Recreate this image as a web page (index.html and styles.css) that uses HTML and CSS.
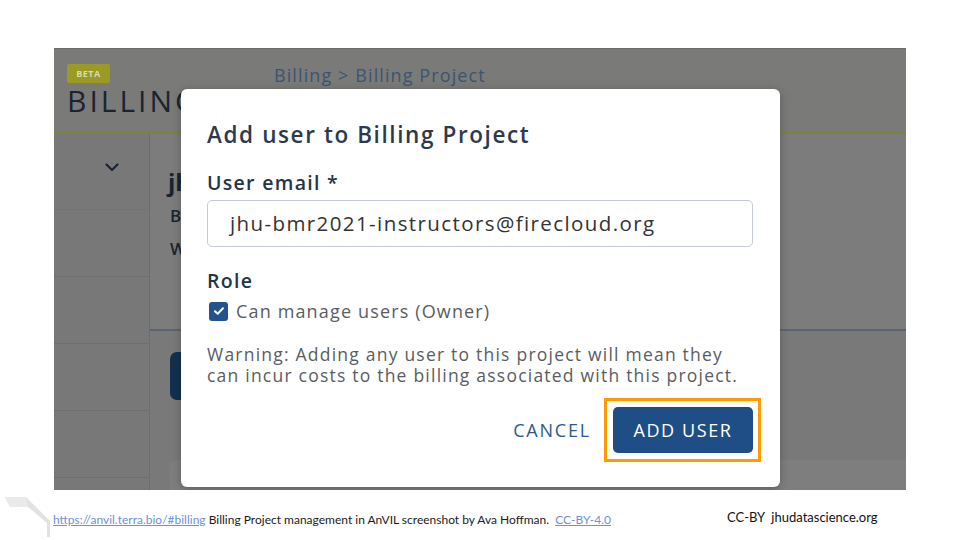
FILE: index.html
```html
<!DOCTYPE html>
<html>
<head>
<meta charset="utf-8">
<link rel="stylesheet" href="styles.css">
</head>
<body>
<div class="slide">
  <div class="shot">
    <div class="app">
      <header class="app-header">
        <div class="brand">
          <span class="beta">BETA</span>
          <span class="brand-title">BILLING</span>
        </div>
        <div class="crumbs">Billing &gt; Billing Project</div>
      </header>
      <div class="app-body">
        <aside class="sidebar">
          <div class="side-row side-top">
            <svg class="chev" width="14" height="9" viewBox="0 0 14 9"><path d="M1.5 1.5 L7 7 L12.5 1.5" fill="none" stroke="#1b2532" stroke-width="2.2" stroke-linecap="round" stroke-linejoin="round"/></svg>
          </div>
          <div class="side-row"></div>
          <div class="side-row"></div>
          <div class="side-row"></div>
          <div class="side-row"></div>
        </aside>
        <main class="main">
          <section class="panel">
            <div class="panel-text">
              <div class="panel-title">jh</div>
              <div class="panel-line">B</div>
              <div class="panel-line">W</div>
            </div>
          </section>
          <div class="main-lower">
            <div class="dark-btn"></div>
            <div class="lower-card"></div>
          </div>
        </main>
      </div>
    </div>

    <div class="modal">
      <h1 class="modal-title">Add user to Billing Project</h1>
      <label class="field-label">User email *</label>
      <div class="input">jhu-bmr2021-instructors@firecloud.org</div>
      <div class="field-label role">Role</div>
      <div class="check-row">
        <span class="checkbox">
          <svg width="12" height="10" viewBox="0 0 12 10"><path d="M2 5.2 L4.7 7.8 L10 2.3" fill="none" stroke="#fff" stroke-width="2" stroke-linecap="round" stroke-linejoin="round"/></svg>
        </span>
        <span class="check-label">Can manage users (Owner)</span>
      </div>
      <p class="warning">Warning: Adding any user to this project will mean they can incur costs to the billing associated with this project.</p>
      <div class="modal-actions">
        <span class="cancel">CANCEL</span>
        <div class="highlight"><span class="add-btn">ADD USER</span></div>
      </div>
    </div>
  </div>

  <footer class="credits">
    <svg class="logo" width="48" height="44" viewBox="0 0 48 44"><polygon points="1,2 22,2 46,26 46,42 43,42 43,28 24,12 6,12" fill="#e2e2e2"/><polygon points="1,2 6,12 24,12 22,2" fill="#eaeaea"/></svg>
    <p class="credit-text"><a class="lnk" href="#">https://anvil.terra.bio/#billing</a> Billing Project management in AnVIL screenshot by Ava Hoffman.&nbsp; <a class="lnk" href="#">CC-BY-4.0</a></p>
    <p class="credit-right">CC-BY&nbsp; jhudatascience.org</p>
  </footer>
</div>
</body>
</html>
```

FILE: styles.css
```css
* { box-sizing: border-box; }
html, body { margin: 0; padding: 0; }
body {
  width: 960px;
  height: 540px;
  background: #ffffff;
  font-family: "Open Sans", "Noto Sans", sans-serif;
  overflow: hidden;
}
.slide {
  width: 960px;
  height: 540px;
  padding-top: 48px;
  position: relative;
}
.shot {
  position: relative;
  margin-left: 54px;
  width: 852px;
  height: 442px;
  overflow: hidden;
  background: #7a7a7a;
}
.app {
  display: flex;
  flex-direction: column;
  height: 100%;
}
.app-header {
  flex: none;
  height: 86px;
  background: #7a7a79;
  border-top: 1px solid #6c6c6c;
  border-bottom: 2px solid #80803f;
  display: flex;
  align-items: flex-start;
  padding-left: 13px;
}
.brand {
  display: flex;
  flex-direction: column;
  padding-top: 15px;
  width: 207px;
}
.beta {
  width: 43px;
  height: 19px;
  background: #9a9a25;
  border-radius: 2px;
  color: #d9d9b5;
  font-weight: 700;
  font-size: 9px;
  line-height: 19px;
  text-align: center;
  letter-spacing: 0.5px;
}
.brand-title {
  font-size: 30px;
  line-height: 32px;
  margin-top: 2px;
  color: #1a2431;
  letter-spacing: 3px;
  white-space: nowrap;
}
.crumbs {
  padding-top: 14px;
  font-size: 18px;
  color: #3c5470;
  letter-spacing: 1.1px;
}
.app-body {
  flex: 1;
  min-height: 0;
  display: flex;
}
.sidebar {
  width: 96px;
  background: #787878;
  border-right: 1px solid #6d6d6d;
  display: flex;
  flex-direction: column;
}
.side-row {
  flex: none;
  height: 67px;
  border-bottom: 1px solid #6f6f6f;
}
.side-top {
  height: 76px;
  border-bottom-color: #747474;
  position: relative;
}
.chev {
  position: absolute;
  left: 51px;
  top: 29px;
}
.main {
  flex: 1;
  display: flex;
  flex-direction: column;
}
.panel {
  flex: none;
  height: 197px;
  background: #7c7c7c;
  border-bottom: 2px solid #5a6472;
  padding: 31px 0 0 18px;
  color: #1a2431;
}
.panel-title {
  font-size: 24px;
  font-weight: 700;
  line-height: 34px;
}
.panel-line {
  font-size: 17px;
  font-weight: 600;
  line-height: 33px;
  padding-left: 2px;
}
.main-lower {
  flex: 1;
  padding: 21px 0 0 20px;
  background: #797979;
}
.dark-btn {
  width: 150px;
  height: 48px;
  background: #12304f;
  border-radius: 7px;
}
.lower-card {
  margin-top: 60px;
  height: 40px;
  background: #7e7e7e;
  border-radius: 6px 0 0 0;
}

/* modal */
.modal {
  position: absolute;
  left: 127px;
  top: 41px;
  width: 599px;
  height: 398px;
  background: #ffffff;
  border-radius: 6px;
  box-shadow: 0 2px 10px rgba(0,0,0,0.25);
  padding: 32px 27px 0 26px;
  display: flex;
  flex-direction: column;
}
.modal-title {
  margin: 0;
  font-size: 22.5px;
  line-height: 28px;
  font-weight: 600;
  color: #2d3a4c;
  letter-spacing: 1.6px;
  white-space: nowrap;
}
.field-label {
  margin-top: 22px;
  font-size: 19.5px;
  line-height: 24px;
  font-weight: 600;
  color: #253548;
  letter-spacing: 1.3px;
}
.field-label.role { margin-top: 22px; }
.input {
  margin-top: 5px;
  height: 47px;
  border: 1px solid #c3cad3;
  border-radius: 5px;
  padding-left: 22px;
  font-size: 20.5px;
  line-height: 45px;
  color: #333333;
  letter-spacing: 1.4px;
  white-space: nowrap;
}
.check-row {
  margin-top: 7px;
  height: 22px;
  display: flex;
  align-items: center;
  gap: 8px;
}
.checkbox {
  width: 19px;
  height: 19px;
  margin-left: 2px;
  background: #25518c;
  border-radius: 3px;
  display: flex;
  align-items: center;
  justify-content: center;
}
.check-label {
  font-size: 18px;
  color: #595d63;
  letter-spacing: 1.15px;
}
.warning {
  margin: 22px 0 0 0;
  max-width: 540px;
  font-size: 17.5px;
  line-height: 21px;
  color: #595d63;
  letter-spacing: 1.22px;
}
.modal-actions {
  margin-top: 12px;
  margin-right: -8px;
  display: flex;
  justify-content: flex-end;
  align-items: center;
  gap: 13px;
}
.cancel {
  font-size: 18px;
  color: #2b5a8d;
  letter-spacing: 1.8px;
}
.highlight {
  border: 3px solid #ff9a00;
  padding: 6px 5px 6px 6px;
}
.add-btn {
  display: block;
  width: 140px;
  height: 46px;
  background: #1f4e87;
  border-radius: 5px;
  color: #ffffff;
  font-size: 18px;
  line-height: 46px;
  text-align: center;
  letter-spacing: 1.6px;
}

/* credits */
.credits {
  position: relative;
  height: 50px;
  display: flex;
  align-items: flex-start;
  font-family: "Lato", sans-serif;
}
.logo {
  margin: 5px 0 0 4px;
  flex: none;
}
.credit-text {
  margin: 22px 0 0 1px;
  font-size: 12px;
  color: #1a1a1a;
  white-space: nowrap;
}
.lnk { color: #6f8fd8; }
.credit-right {
  margin: 19px 0 0 116px;
  font-size: 13px;
  color: #111111;
  white-space: nowrap;
}
```
